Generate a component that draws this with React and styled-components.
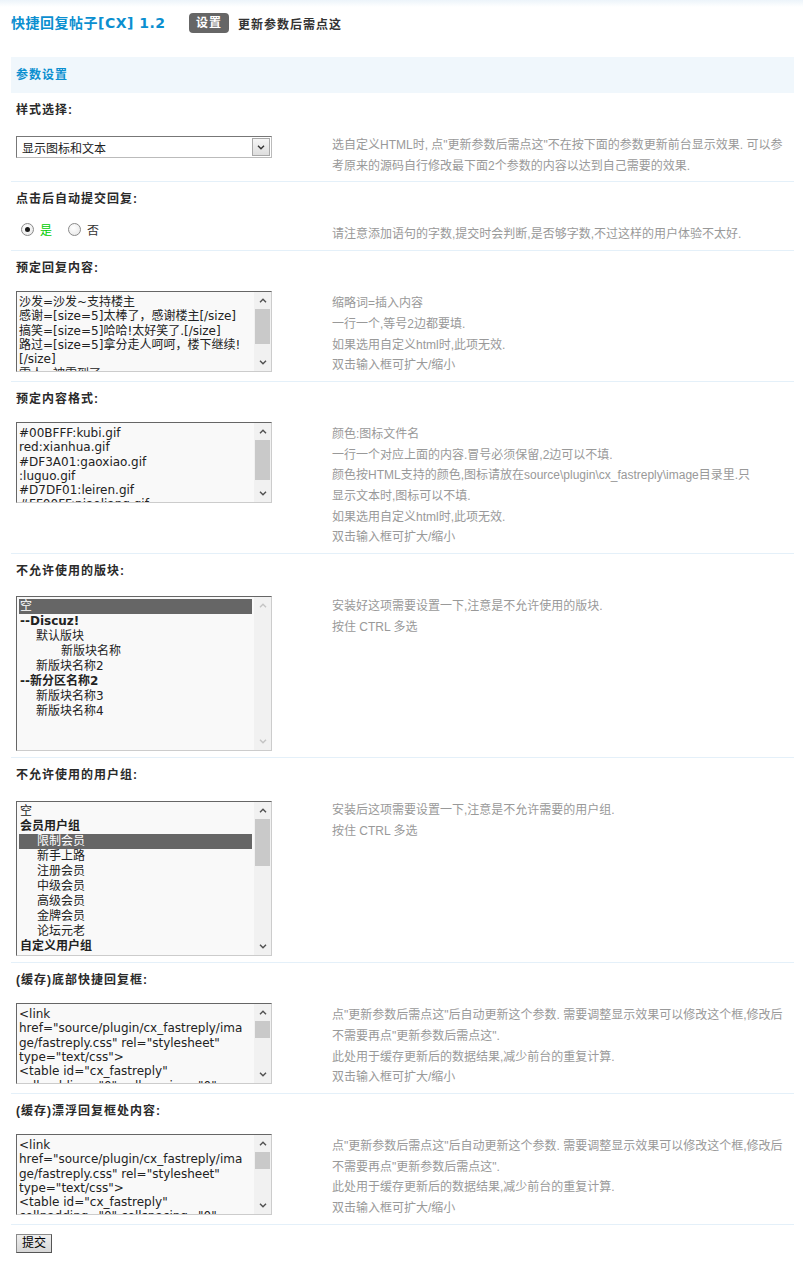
import React from "react";
import styled, { createGlobalStyle } from "styled-components";

const GlobalStyle = createGlobalStyle`
  html, body {
    margin: 0;
    padding: 0;
  }
  body {
    font: 12px "Liberation Sans", "Noto Sans CJK SC", sans-serif;
    color: #333;
    background: #fff linear-gradient(#ecf4fa, #fff 7px) no-repeat;
  }
`;

const Page = styled.div`
  padding: 10px 9px 28px 11px;
`;

const TitleBar = styled.div`
  display: flex;
  align-items: center;
  height: 24px;
`;

const Title = styled.h3`
  margin: 0;
  width: 178px;
  font: bold 14px "DejaVu Sans", "Noto Sans CJK SC", sans-serif;
  letter-spacing: 0.5px;
  color: #0b8fd0;
  white-space: nowrap;
`;

const Tab = styled.span`
  margin-top: 2px;
  height: 20px;
  line-height: 20px;
  padding: 0 7px;
  border-radius: 4px;
  background: #666;
  color: #fff;
  font-weight: bold;
  letter-spacing: 1px;
`;

const TabLink = styled.span`
  margin: 2px 0 0 9px;
  color: #333;
  font-weight: bold;
  letter-spacing: 1px;
`;

const PanelHead = styled.div`
  margin-top: 23px;
  height: 36px;
  line-height: 36px;
  padding-left: 5px;
  background: #f0f7fc;
  color: #0b8fd0;
  font-weight: bold;
  letter-spacing: 1px;
`;

const Setting = styled.div`
  border-bottom: 1px solid #e4f0f9;
`;

const Label = styled.div`
  padding: 10px 5px 3px;
  line-height: 15px;
  font-weight: bold;
  letter-spacing: 1px;
  color: #2a2a2a;
`;

const Row = styled.div`
  display: flex;
  align-items: flex-start;
  padding: 12px 5px 5px;
`;

const Field = styled.div`
  flex: none;
  width: 316px;
`;

const Tip = styled.div`
  padding-top: 2px;
  line-height: 20.7px;
  color: #999;
  white-space: nowrap;
`;

const SelectBox = styled.div`
  display: flex;
  align-items: center;
  box-sizing: border-box;
  width: 256px;
  height: 22px;
  margin-top: 3px;
  padding: 0 1px 0 5px;
  border: 1px solid;
  border-color: #777 #bbb #bbb #777;
  background: #fff;
`;

const SelectText = styled.span`
  flex: 1;
  color: #222;
`;

const DropButton = styled.span`
  display: flex;
  align-items: center;
  justify-content: center;
  box-sizing: border-box;
  width: 18px;
  height: 18px;
  border: 1px solid #a8a8a8;
  background: linear-gradient(#f6f6f6, #dedede);
`;

const RadioGroup = styled.div`
  display: flex;
  align-items: center;
  height: 14px;
  padding-left: 5px;
`;

const RadioDot = styled.span`
  display: flex;
  align-items: center;
  justify-content: center;
  box-sizing: border-box;
  width: 13px;
  height: 13px;
  border-radius: 50%;
  border: 1px solid #8a8a8a;
  background: radial-gradient(circle at 40% 35%, #fff, #e4e4e4);

  &::after {
    content: "";
    width: 5px;
    height: 5px;
    border-radius: 50%;
    background: ${(p) => (p.$checked ? "#1a1a1a" : "transparent")};
  }
`;

const RadioLabel = styled.span`
  margin: 0 16px 0 6px;
  color: ${(p) => (p.$active ? "#0c0" : "#333")};
`;

const Box = styled.div`
  display: flex;
  box-sizing: border-box;
  width: 256px;
  height: ${(p) => p.$h}px;
  margin-top: ${(p) => p.$mt || 0}px;
  margin-bottom: ${(p) => p.$mb || 0}px;
  border: 1px solid;
  border-color: #666 #ccc #ccc #666;
  background: #f9f9f9;
`;

const TextArea = styled.textarea`
  flex: 1;
  min-width: 0;
  margin: 0;
  padding: 3px 2px 0;
  border: 0;
  outline: none;
  resize: none;
  overflow: hidden;
  background: transparent;
  white-space: pre;
  font: 12px/14.3px "DejaVu Sans", "Noto Sans CJK SC", sans-serif;
  color: #222;
`;

const List = styled.div`
  flex: 1;
  min-width: 0;
  padding: 2px 2px 0;
  overflow: hidden;
  font: 12px "DejaVu Sans", "Noto Sans CJK SC", sans-serif;
`;

const Option = styled.div`
  height: 15px;
  line-height: 15px;
  padding-left: ${(p) => 1 + (p.$indent || 0)}px;
  white-space: nowrap;
  font-weight: ${(p) => (p.$bold ? "bold" : "normal")};
  background: ${(p) => (p.$selected ? "#666" : "transparent")};
  color: ${(p) => (p.$selected ? "#fff" : "#222")};
`;

const Scroll = styled.div`
  flex: none;
  display: flex;
  flex-direction: column;
  width: 17px;
  background: #f1f1f1;
`;

const Arrow = styled.div`
  flex: none;
  display: flex;
  align-items: center;
  justify-content: center;
  height: 17px;
`;

const Track = styled.div`
  flex: 1;
`;

const Thumb = styled.div`
  height: ${(p) => p.$h}px;
  margin: 0 1px;
  background: #c9c9c9;
`;

const SubmitBar = styled.div`
  padding: 9px 5px;
`;

const Button = styled.button`
  height: 19px;
  margin: 0;
  padding: 0 5px;
  border: 1px solid;
  border-color: #8a8a8a #555 #555 #8a8a8a;
  background: linear-gradient(#efefef, #d6d6d6);
  font: 12px/15px "Liberation Sans", "Noto Sans CJK SC", sans-serif;
  color: #000;
`;

const Chevron = ({ up, color = "#505050" }) => (
  <svg width="8" height="5" viewBox="0 0 8 5">
    <path
      d={up ? "M1 4.2 L4 1.2 L7 4.2" : "M1 0.8 L4 3.8 L7 0.8"}
      fill="none"
      stroke={color}
      strokeWidth="1.4"
    />
  </svg>
);

const ScrollBar = ({ thumb, disabled }) => {
  const c = disabled ? "#c4c4c4" : "#505050";
  return (
    <Scroll>
      <Arrow>
        <Chevron up color={c} />
      </Arrow>
      <Track>{thumb ? <Thumb $h={thumb} /> : null}</Track>
      <Arrow>
        <Chevron color={c} />
      </Arrow>
    </Scroll>
  );
};

const TextBox = ({ value, thumb }) => (
  <Box $h={81} $mb={2}>
    <TextArea wrap="off" defaultValue={value} spellCheck={false} />
    <ScrollBar thumb={thumb} />
  </Box>
);

const ListBox = ({ items, thumb, mt }) => (
  <Box $h={155} $mt={mt} $mb={1}>
    <List>
      {items.map((it, i) => (
        <Option key={i} $indent={it.indent} $bold={it.bold} $selected={it.selected}>
          {it.text}
        </Option>
      ))}
    </List>
    <ScrollBar thumb={thumb} disabled={!thumb} />
  </Box>
);

const Lines = ({ lines }) =>
  lines.map((l, i) => (
    <React.Fragment key={i}>
      {i > 0 && <br />}
      {l}
    </React.Fragment>
  ));

const replyText = [
  "沙发=沙发~支持楼主",
  "感谢=[size=5]太棒了，感谢楼主[/size]",
  "搞笑=[size=5]哈哈!太好笑了.[/size]",
  "路过=[size=5]拿分走人呵呵，楼下继续!",
  "[/size]",
  "雷人=被雷到了",
  "顶=[size=5]顶一下[/size]",
].join("\n");

const formatText = [
  "#00BFFF:kubi.gif",
  "red:xianhua.gif",
  "#DF3A01:gaoxiao.gif",
  ":luguo.gif",
  "#D7DF01:leiren.gif",
  "#FF00FF:piaoliang.gif",
].join("\n");

const cacheText = [
  "<link",
  'href="source/plugin/cx_fastreply/ima',
  'ge/fastreply.css" rel="stylesheet"',
  'type="text/css">',
  '<table id="cx_fastreply"',
  'cellpadding="0" cellspacing="0"',
  'border="0">',
].join("\n");

const forums = [
  { text: "空", selected: true },
  { text: "--Discuz!", bold: true },
  { text: "默认版块", indent: 16 },
  { text: "新版块名称", indent: 41 },
  { text: "新版块名称2", indent: 16 },
  { text: "--新分区名称2", bold: true },
  { text: "新版块名称3", indent: 16 },
  { text: "新版块名称4", indent: 16 },
];

const groups = [
  { text: "空" },
  { text: "会员用户组", bold: true },
  { text: "限制会员", indent: 17, selected: true },
  { text: "新手上路", indent: 17 },
  { text: "注册会员", indent: 17 },
  { text: "中级会员", indent: 17 },
  { text: "高级会员", indent: 17 },
  { text: "金牌会员", indent: 17 },
  { text: "论坛元老", indent: 17 },
  { text: "自定义用户组", bold: true },
];

const cacheTips = [
  '点"更新参数后需点这"后自动更新这个参数. 需要调整显示效果可以修改这个框,修改后',
  '不需要再点"更新参数后需点这".',
  "此处用于缓存更新后的数据结果,减少前台的重复计算.",
  "双击输入框可扩大/缩小",
];

const settings = [
  {
    label: "样式选择:",
    field: (
      <SelectBox>
        <SelectText>显示图标和文本</SelectText>
        <DropButton>
          <Chevron color="#333" />
        </DropButton>
      </SelectBox>
    ),
    tips: [
      '选自定义HTML时, 点"更新参数后需点这"不在按下面的参数更新前台显示效果. 可以参',
      "考原来的源码自行修改最下面2个参数的内容以达到自己需要的效果.",
    ],
  },
  {
    label: "点击后自动提交回复:",
    field: (
      <RadioGroup>
        <RadioDot $checked />
        <RadioLabel $active>是</RadioLabel>
        <RadioDot />
        <RadioLabel>否</RadioLabel>
      </RadioGroup>
    ),
    tips: ["请注意添加语句的字数,提交时会判断,是否够字数,不过这样的用户体验不太好."],
  },
  {
    label: "预定回复内容:",
    field: <TextBox value={replyText} thumb={35} />,
    tips: ["缩略词=插入内容", "一行一个,等号2边都要填.", "如果选用自定义html时,此项无效.", "双击输入框可扩大/缩小"],
  },
  {
    label: "预定内容格式:",
    field: <TextBox value={formatText} thumb={40} />,
    tips: [
      "颜色:图标文件名",
      "一行一个对应上面的内容.冒号必须保留,2边可以不填.",
      "颜色按HTML支持的颜色,图标请放在source\\plugin\\cx_fastreply\\image目录里.只",
      "显示文本时,图标可以不填.",
      "如果选用自定义html时,此项无效.",
      "双击输入框可扩大/缩小",
    ],
  },
  {
    label: "不允许使用的版块:",
    field: <ListBox items={forums} mt={2} />,
    tips: ["安装好这项需要设置一下,注意是不允许使用的版块.", "按住 CTRL 多选"],
  },
  {
    label: "不允许使用的用户组:",
    field: <ListBox items={groups} thumb={47} mt={3} />,
    tips: ["安装后这项需要设置一下,注意是不允许需要的用户组.", "按住 CTRL 多选"],
  },
  {
    label: "(缓存)底部快捷回复框:",
    field: <TextBox value={cacheText} thumb={17} />,
    tips: cacheTips,
  },
  {
    label: "(缓存)漂浮回复框处内容:",
    field: <TextBox value={cacheText} thumb={17} />,
    tips: cacheTips,
  },
];

export default function App() {
  return (
    <>
      <GlobalStyle />
      <Page>
        <TitleBar>
          <Title>快捷回复帖子[CX] 1.2</Title>
          <Tab>设置</Tab>
          <TabLink>更新参数后需点这</TabLink>
        </TitleBar>
        <PanelHead>参数设置</PanelHead>
        {settings.map((s) => (
          <Setting key={s.label}>
            <Label>{s.label}</Label>
            <Row>
              <Field>{s.field}</Field>
              <Tip>
                <Lines lines={s.tips} />
              </Tip>
            </Row>
          </Setting>
        ))}
        <SubmitBar>
          <Button type="button">提交</Button>
        </SubmitBar>
      </Page>
    </>
  );
}
